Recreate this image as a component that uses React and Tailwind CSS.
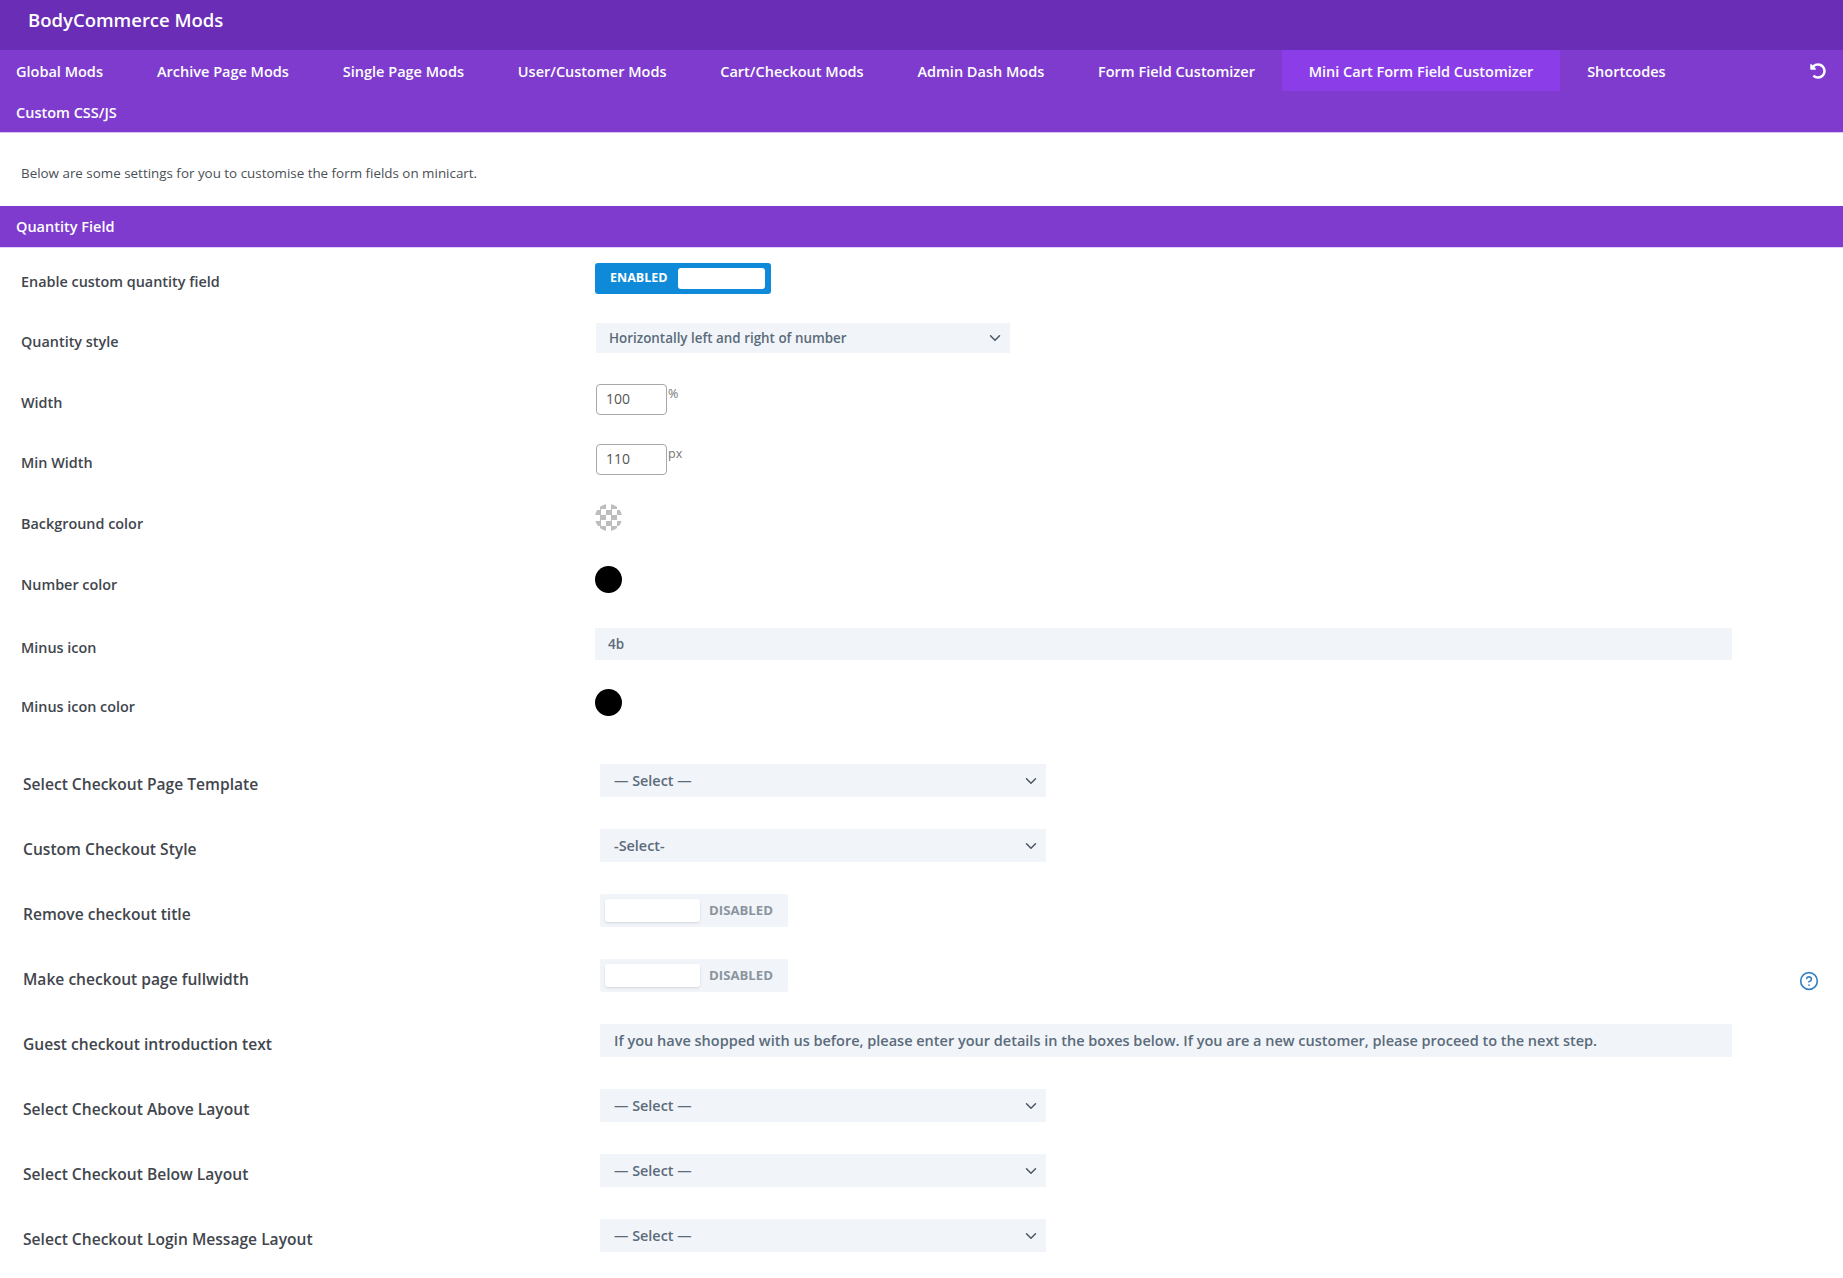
import React from 'react';
import { ChevronDown, CircleHelp } from 'lucide-react';
import { FaUndoAlt } from 'react-icons/fa';

const tabs = [
  { name: 'Global Mods', cls: 'pl-4 pr-[27px]' },
  { name: 'Archive Page Mods', cls: 'px-[27px]' },
  { name: 'Single Page Mods', cls: 'px-[26.9px]' },
  { name: 'User/Customer Mods', cls: 'px-[26.9px]' },
  { name: 'Cart/Checkout Mods', cls: 'px-[26.9px]' },
  { name: 'Admin Dash Mods', cls: 'px-[26.9px]' },
  { name: 'Form Field Customizer', cls: 'px-[26.9px]' },
  { name: 'Mini Cart Form Field Customizer', cls: 'px-[26.9px] bg-[#8b3ee8]' },
  { name: 'Shortcodes', cls: 'px-[26.9px]' },
  { name: 'Custom CSS/JS', cls: 'pl-4 pr-[27px]' },
];

// small select in the first block, wide one in the second
const Select = ({ value, cls }) => (
  <div className={`flex items-center justify-between bg-[#f1f5f9] text-[#5b6b7b] font-semibold ${cls}`}>
    <span>{value}</span>
    <ChevronDown size={18} strokeWidth={2} className="text-[#4b5563]" />
  </div>
);

const NumberField = ({ value, unit }) => (
  <div className="flex items-start">
    <input
      readOnly
      value={value}
      className="w-[71px] h-[31px] border border-[#a8a8a8] rounded-[4px] pl-[9px] pb-[2px] text-[14px] text-[#555] outline-none"
    />
    <span className="ml-[1px] mt-[1px] text-[12.5px] leading-[18px] text-[#777]">{unit}</span>
  </div>
);

const Swatch = ({ black }) => (
  <div
    className={
      black
        ? 'w-[27px] h-[27px] rounded-full bg-black'
        : 'w-[27px] h-[27px] rounded-full bg-[repeating-conic-gradient(#bdbdbd_0_25%,#ffffff_0_50%)] bg-[length:11px_11px]'
    }
  />
);

const Row = ({ label, h, labelCls, children }) => (
  <div className={`flex items-center ${h}`}>
    <div className={`w-[595px] shrink-0 pl-[21px] text-[14.4px] font-semibold text-[#41464d] ${labelCls}`}>{label}</div>
    {children}
  </div>
);

const Row2 = ({ label, children }) => (
  <div className="flex items-center h-[65px]">
    <div className="w-[600px] shrink-0 pl-[23px] pt-[9px] text-[15.6px] font-semibold text-[#41464d]">{label}</div>
    {children}
  </div>
);

const WideSelect = ({ value }) => (
  <Select value={value} cls="w-[446px] h-[33px] pl-[14px] pr-[6px] text-[14.4px]" />
);

const OffToggle = () => (
  <div className="flex items-center w-[188px] h-[33px] bg-[#f1f5f9] pl-[5px] rounded-[2px]">
    <div className="w-[95px] h-[23px] bg-white rounded-[3px] shadow-sm" />
    <span className="ml-[9px] text-[13.2px] font-bold text-[#8b949e]">DISABLED</span>
  </div>
);

export default function App() {
  return (
    <div className="min-h-[1278px] bg-white font-['Open_Sans',sans-serif]">
      <div className="h-[50px] bg-[#6a2db5] pl-[28px] pt-[4px] text-[18.5px] leading-[32px] font-semibold text-white">
        BodyCommerce Mods
      </div>

      <div className="relative flex flex-wrap bg-[#7e3bce] border-b border-[#d9c2f5] pr-[60px]">
        {tabs.map((t) => (
          <div key={t.name} className={`flex items-center h-[41px] pt-[2px] text-[14.5px] font-semibold text-white ${t.cls}`}>
            {t.name}
          </div>
        ))}
        <FaUndoAlt size={16} className="absolute right-[17px] top-[13px] text-white" />
      </div>

      <div className="h-[73px] flex items-center pl-[21px] pt-[8px] text-[13.4px] text-[#4a4f55]">
        Below are some settings for you to customise the form fields on minicart.
      </div>

      <div className="h-[42px] flex items-center pl-4 bg-[#7e3bce] border-b border-[#e3d0fa] text-[14.5px] font-semibold text-white">
        Quantity Field
      </div>

      <Row label="Enable custom quantity field" h="h-[60px]" labelCls="pt-[8px]">
        <div className="flex items-center w-[176px] h-[31px] bg-[#0f8ad8] rounded-[3px] pl-[15px]">
          <span className="w-[68px] pt-[1px] text-[12.5px] font-bold text-white">ENABLED</span>
          <div className="w-[87px] h-[21px] bg-white rounded-[3px]" />
        </div>
      </Row>
      <Row label="Quantity style" h="h-[60px]" labelCls="pt-[8px]">
        <Select
          value="Horizontally left and right of number"
          cls="w-[414px] h-[30px] ml-[1px] pl-[13px] pr-[6px] text-[13.4px]"
        />
      </Row>
      <Row label="Width" h="h-[62px]" labelCls="pt-[8px]">
        <div className="ml-[1px]"><NumberField value="100" unit="%" /></div>
      </Row>
      <Row label="Min Width" h="h-[58px]" labelCls="pt-[8px]">
        <div className="ml-[1px]"><NumberField value="110" unit="px" /></div>
      </Row>
      <Row label="Background color" h="h-[58px]" labelCls="pt-[14px]">
        <Swatch />
      </Row>
      <Row label="Number color" h="h-[66px]" labelCls="pt-[12px]">
        <Swatch black />
      </Row>
      <Row label="Minus icon" h="h-[64px]" labelCls="pt-[8px]">
        <input
          readOnly
          value="4b"
          className="w-[1137px] h-[32px] bg-[#f1f5f9] pl-[13px] text-[13.5px] font-semibold text-[#5b6b7b] outline-none"
        />
      </Row>
      <Row label="Minus icon color" h="h-[52px]" labelCls="pt-[10px]">
        <Swatch black />
      </Row>

      <div className="mt-[20px]">
        <Row2 label="Select Checkout Page Template"><WideSelect value="— Select —" /></Row2>
        <Row2 label="Custom Checkout Style"><WideSelect value="-Select-" /></Row2>
        <Row2 label="Remove checkout title"><OffToggle /></Row2>
        <Row2 label="Make checkout page fullwidth">
          <OffToggle />
          <CircleHelp size={20} strokeWidth={2} className="ml-auto mr-[24px] mt-[10px] text-[#3b82c4]" />
        </Row2>
        <Row2 label="Guest checkout introduction text">
          <input
            readOnly
            value="If you have shopped with us before, please enter your details in the boxes below. If you are a new customer, please proceed to the next step."
            className="w-[1132px] h-[33px] bg-[#f1f5f9] pl-[14px] text-[14.5px] font-semibold text-[#5b6b7b] outline-none"
          />
        </Row2>
        <Row2 label="Select Checkout Above Layout"><WideSelect value="— Select —" /></Row2>
        <Row2 label="Select Checkout Below Layout"><WideSelect value="— Select —" /></Row2>
        <Row2 label="Select Checkout Login Message Layout"><WideSelect value="— Select —" /></Row2>
      </div>
    </div>
  );
}
